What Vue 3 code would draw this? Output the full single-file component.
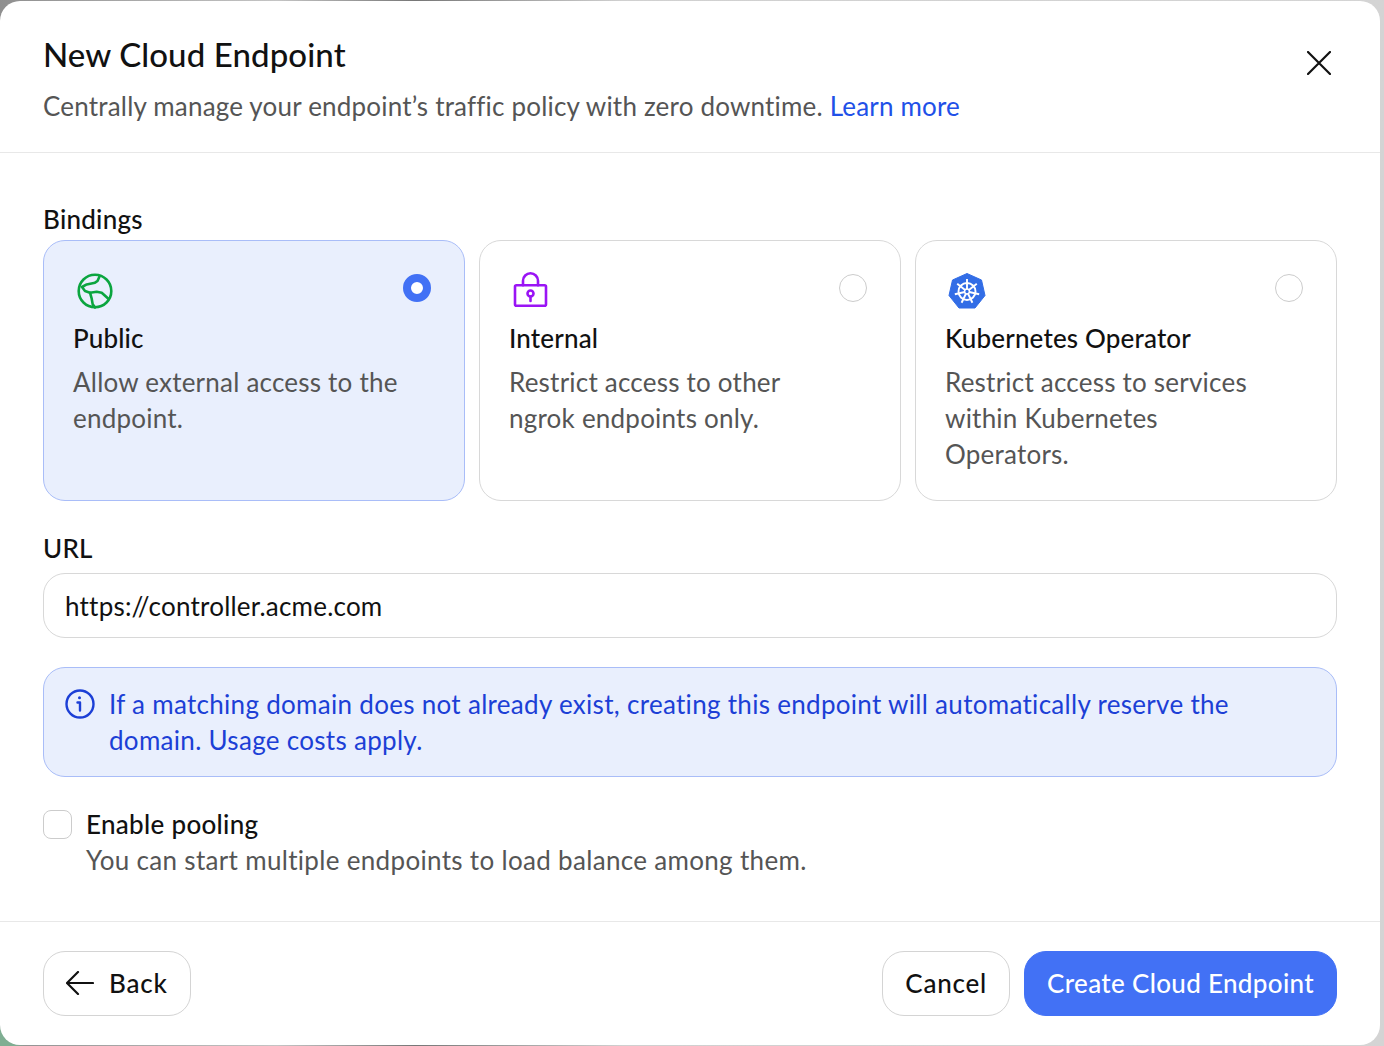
<script setup>
const bindings = [
  { id: 'public', title: 'Public', desc: 'Allow external access to the endpoint.', selected: true },
  { id: 'internal', title: 'Internal', desc: 'Restrict access to other ngrok endpoints only.', selected: false },
  { id: 'k8s', title: 'Kubernetes Operator', desc: 'Restrict access to services within Kubernetes Operators.', selected: false }
]
const spokes = [0, 51.4, 102.8, 154.3, 205.7, 257.1, 308.6]
</script>

<template>
  <div class="stage">
    <div class="modal">
      <header class="head">
        <div>
          <h1>New Cloud Endpoint</h1>
          <p class="sub">Centrally manage your endpoint’s traffic policy with zero downtime. <a>Learn more</a></p>
        </div>
        <svg class="close" width="24" height="24" viewBox="0 0 24 24" fill="none" stroke="#111" stroke-width="2.2" stroke-linecap="round"><path d="M1 1 23 23M23 1 1 23"/></svg>
      </header>

      <main class="body">
        <div class="label">Bindings</div>
        <div class="cards">
          <div v-for="b in bindings" :key="b.id" class="card" :class="{ on: b.selected }">
            <span class="radio" :class="{ on: b.selected }"></span>
            <div class="ico">
              <svg v-if="b.id === 'public'" class="globe" width="36" height="36" viewBox="0 0 36 36" fill="none" stroke="#0ba53f" stroke-width="2.6" stroke-linejoin="round" stroke-linecap="round">
                <circle cx="18" cy="18" r="16.3"/>
                <path d="M22.400 3.700 20.500 8 18 9.700 9.700 11.400 5 14 8 18 13 19.700 14.700 25.700 15.700 31.400 18 34.400"/>
                <path d="M13 19.700 19.700 18.700 24.700 19.700 31.400 25.700"/>
              </svg>
              <svg v-else-if="b.id === 'internal'" class="lock" width="36" height="38" viewBox="0 0 36 38" fill="none" stroke="#9a14f5" stroke-width="2.6" stroke-linecap="round" stroke-linejoin="round">
                <rect x="2" y="14.300" width="31" height="20.400" rx="1.500"/>
                <path d="M10 14.300V9.800a7.500 7.500 0 0 1 15 0v4.500"/>
                <circle cx="17.500" cy="22.500" r="3"/>
                <path d="M17.500 25.500V30"/>
              </svg>
              <svg v-else width="38" height="36" viewBox="0 0 38 36">
                <path d="M19 0.500 33.500 7 37 22.500 27 35 11 35 1 22.500 4.500 7Z" fill="#326de6" stroke="#326de6" stroke-linejoin="round" stroke-width="1"/>
                <g fill="none" stroke="#fff" stroke-width="1.900">
                  <circle cx="19" cy="18.500" r="8.500"/>
                  <line v-for="a in spokes" :key="a" x1="19" y1="18.500" x2="19" y2="6" :transform="`rotate(${a} 19 18.500)`"/>
                </g>
                <circle cx="19" cy="18.500" r="2.400" fill="#326de6" stroke="#fff" stroke-width="1.500"/>
              </svg>
            </div>
            <div class="card-title">{{ b.title }}</div>
            <div class="card-desc">{{ b.desc }}</div>
          </div>
        </div>

        <div class="label url-label">URL</div>
        <div class="input">https://controller.acme.com</div>

        <div class="info">
          <svg width="30" height="30" viewBox="0 0 30 30" fill="none" stroke="#1c3fd6" stroke-width="2.400" stroke-linecap="round" stroke-linejoin="round">
            <circle cx="15" cy="15" r="13.500"/>
            <path d="M12.500 13.500H15V21.500"/>
            <circle cx="14.500" cy="8.800" r="0.700" fill="#1c3fd6" stroke-width="1.600"/>
          </svg>
          <p>If a matching domain does not already exist, creating this endpoint will automatically reserve the domain. Usage costs apply.</p>
        </div>

        <div class="pool">
          <span class="check"></span>
          <div>
            <div class="pool-title">Enable pooling</div>
            <div class="pool-sub">You can start multiple endpoints to load balance among them.</div>
          </div>
        </div>
      </main>

      <footer class="foot">
        <button class="btn back">
          <svg width="28" height="24" viewBox="0 0 28 24" fill="none" stroke="#111" stroke-width="2.200" stroke-linecap="round" stroke-linejoin="round"><path d="M27 12H1M12 1 1 12 12 23"/></svg>
          <span>Back</span>
        </button>
        <div class="right">
          <button class="btn"><span>Cancel</span></button>
          <button class="btn primary"><span>Create Cloud Endpoint</span></button>
        </div>
      </footer>
    </div>
  </div>
</template>

<style>
html, body { margin: 0; background: #d4d4d4; }
</style>

<style scoped>
.stage {
  width: 1384px;
  height: 1046px;
  box-sizing: border-box;
  padding: 1px 4px 1px 0;
  background:
    radial-gradient(circle at 0 1046px, #7fae92 0, #7fae92 14px, transparent 26px),
    linear-gradient(90deg, #8f8f8f 0, #c4c4c4 20%, #777 30%, #d0d0d0 45%, #d4d4d4 100%);
  font-family: "Lato", "Liberation Sans", sans-serif;
  color: #111;
}
.modal {
  height: 100%;
  background: #fff;
  border-radius: 20px;
  display: flex;
  flex-direction: column;
  overflow: hidden;
}
.head {
  height: 152px;
  flex: none;
  box-sizing: border-box;
  padding: 33px 43px 0;
  border-bottom: 1px solid #e8e8e8;
  display: flex;
  justify-content: space-between;
  align-items: flex-start;
}
h1 { margin: 0; font-size: 33px; line-height: 40px; font-weight: 500; letter-spacing: 0.1px; }
.sub { margin: 14px 0 0; font-size: 26px; line-height: 36px; color: #555; letter-spacing: 0.19px; }
.sub a { color: #2150e8; }
.close { margin: 17px 6px 0 0; }
.body { flex: 1; padding: 50px 43px 0; }
.label { font-size: 26px; line-height: 32px; font-weight: 500; letter-spacing: 0.25px; }
.cards { display: grid; grid-template-columns: repeat(3, 422px); gap: 14px; margin-top: 5px; }
.card {
  position: relative;
  height: 261px;
  box-sizing: border-box;
  border: 1px solid #d8d8d8;
  border-radius: 22px;
  padding: 30px 29px 0;
}
.card.on { background: #e9effd; border-color: #a9bdf8; }
.radio {
  position: absolute;
  top: 33px;
  right: 33px;
  width: 28px;
  height: 28px;
  box-sizing: border-box;
  border: 1px solid #ccc;
  border-radius: 50%;
}
.radio.on { border: 8px solid #4271f5; background: #fff; }
.ico { height: 38px; display: flex; align-items: flex-end; margin-left: 3px; }
.globe { margin-left: 0.500px; }
.lock { margin-left: 1px; }
.card-title { margin-top: 11px; font-size: 26px; line-height: 36px; font-weight: 500; letter-spacing: 0.15px; }
.card-desc { margin-top: 8px; max-width: 330px; font-size: 26px; line-height: 36px; color: #555; letter-spacing: 0.22px; }
.url-label { margin-top: 31px; }
.input {
  margin-top: 9px;
  height: 65px;
  box-sizing: border-box;
  border: 1px solid #d8d8d8;
  border-radius: 22px;
  padding: 0 21px;
  display: flex;
  align-items: center;
  font-size: 26px;
  letter-spacing: 0.22px;
}
.info {
  margin-top: 29px;
  height: 110px;
  box-sizing: border-box;
  background: #e9effd;
  border: 1px solid #a9bdf8;
  border-radius: 22px;
  padding: 18px 80px 18px 21px;
  display: flex;
  gap: 14px;
  color: #1c3fd6;
}
.info svg { flex: none; margin-top: 3px; }
.info p { margin: 0; font-size: 26px; line-height: 36px; letter-spacing: 0.3px; }
.pool { margin-top: 33px; display: flex; gap: 14px; }
.check {
  flex: none;
  width: 29px;
  height: 29px;
  box-sizing: border-box;
  border: 1px solid #ccc;
  border-radius: 8px;
}
.pool-title { margin-top: -1px; font-size: 26px; line-height: 30px; font-weight: 500; letter-spacing: 0.3px; }
.pool-sub { margin-top: 6px; font-size: 26px; line-height: 30px; color: #555; letter-spacing: 0.32px; }
.foot {
  height: 124px;
  flex: none;
  box-sizing: border-box;
  border-top: 1px solid #e8e8e8;
  padding: 29px 43px 0;
  display: flex;
  justify-content: space-between;
  align-items: flex-start;
}
.right { display: flex; gap: 14px; }
.btn {
  height: 65px;
  box-sizing: border-box;
  padding: 0 22px 2px;
  border: 1px solid #d4d4d4;
  border-radius: 22px;
  background: #fff;
  color: #111;
  font: 500 26px "Lato", "Liberation Sans", sans-serif;
  display: flex;
  align-items: center;
  gap: 15px;
  letter-spacing: 0.8px;
}
.btn.primary { background: #4271f5; border-color: #4271f5; color: #fff; letter-spacing: 0.33px; }
</style>
